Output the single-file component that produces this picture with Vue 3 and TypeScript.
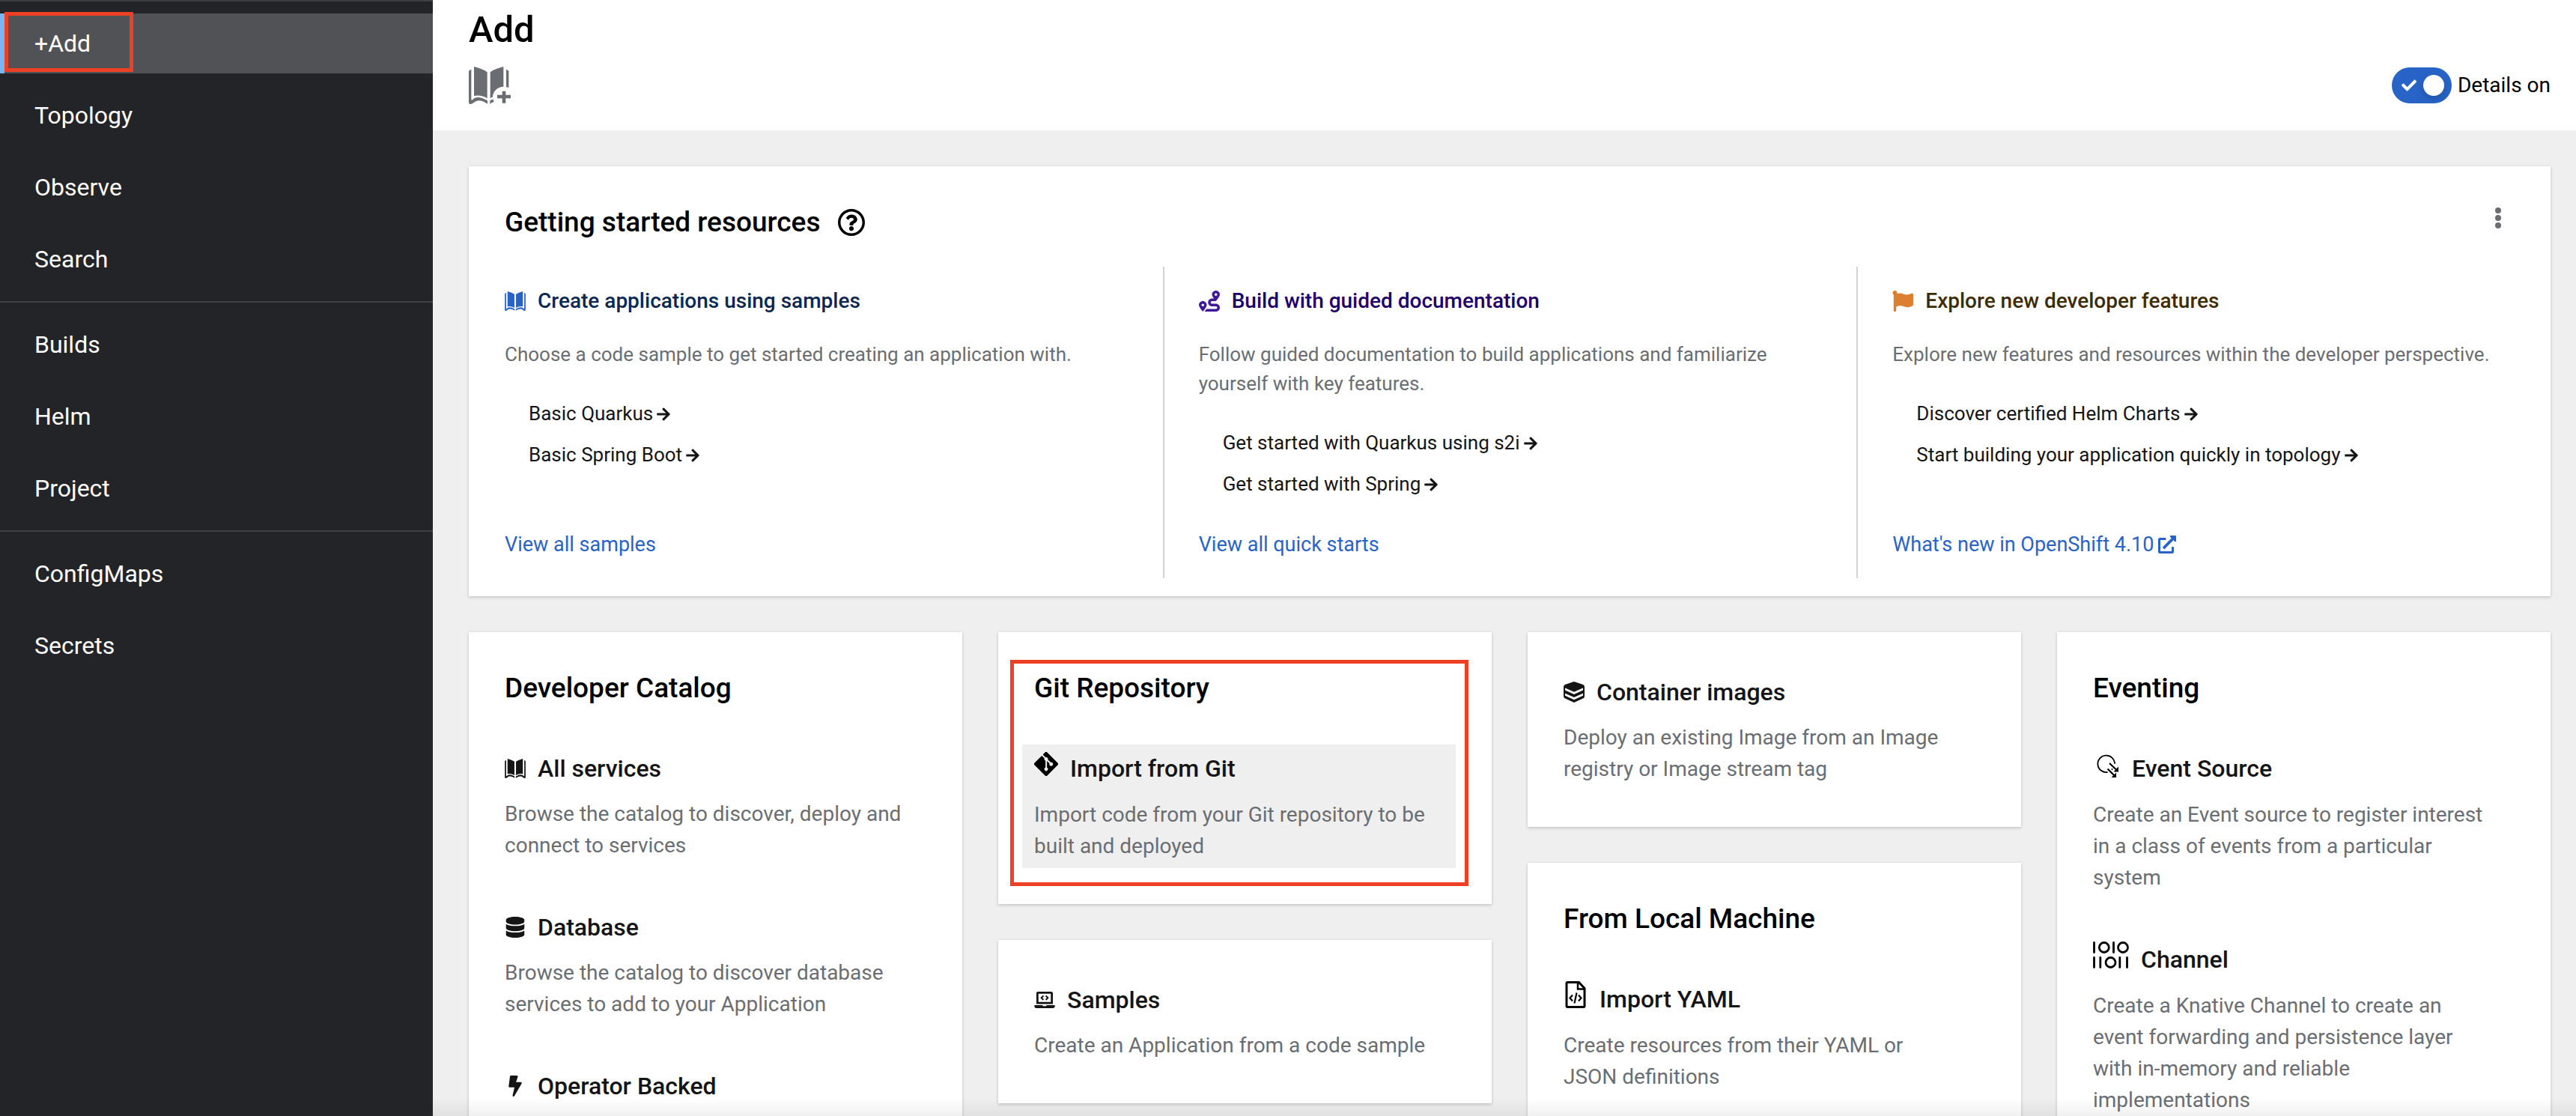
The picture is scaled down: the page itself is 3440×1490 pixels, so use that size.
<script setup lang="ts">
import { computed, h, ref } from 'vue'

interface IconDef {
  box: string
  width: number
  height: number
  path: string
}

const bookPath =
  'M0 18Q2 13 10 11V126Q10 140 15 133Q32 112 75 136V149Q40 126 20 144Q12 150 7 150Q0 150 0 143Z' +
  'M160 18Q158 13 150 11V126Q150 140 145 133Q128 112 85 136V149Q120 126 140 144Q148 150 153 150Q160 150 160 143Z' +
  'M21 0Q55 8 74 22V127Q50 112 21 117Z' +
  'M139 0Q105 8 86 22V127Q110 112 139 117Z'

const icons: Record<string, IconDef> = {
  catalog: { box: '0 0 160 150', width: 28, height: 26, path: bookPath },
  route: {
    box: '0 0 512 512', width: 28, height: 28,
    path: 'M416 320h-96c-17.6 0-32-14.4-32-32s14.4-32 32-32h96s96-107 96-160-43-96-96-96-96 43-96 96c0 25.5 22.2 63.4 45.3 96H320c-52.9 0-96 43.1-96 96s43.1 96 96 96h96c17.6 0 32 14.4 32 32s-14.4 32-32 32H185.5c-16 24.8-33.8 47.7-47.3 64H416c52.9 0 96-43.1 96-96s-43.1-96-96-96zm0-256c17.7 0 32 14.3 32 32s-14.3 32-32 32-32-14.3-32-32 14.3-32 32-32zM96 256c-53 0-96 43-96 96s96 160 96 160 96-107 96-160-43-96-96-96zm0 128c-17.7 0-32-14.3-32-32s14.3-32 32-32 32 14.3 32 32-14.3 32-32 32z',
  },
  flag: {
    box: '0 0 512 512', width: 28, height: 28,
    path: 'M349.565 98.783C295.978 98.783 251.721 64 184.348 64c-24.955 0-47.309 4.384-68.045 12.013a55.947 55.947 0 0 0 3.586-23.562C118.117 24.015 94.806 1.206 66.338.048 34.345-1.254 8 24.296 8 56c0 19.026 9.497 35.825 24 45.945V488c0 13.255 10.745 24 24 24h16c13.255 0 24-10.745 24-24v-94.4c28.311-12.064 63.582-22.122 114.435-22.122 53.588 0 97.844 34.783 165.217 34.783 48.169 0 86.667-16.294 122.505-40.858C506.84 359.452 512 349.571 512 339.045v-243.1c0-23.393-24.269-38.87-45.485-29.016-34.338 15.948-76.454 31.854-116.95 31.854z',
  },
  arrow: {
    box: '0 0 448 512', width: 18, height: 20,
    path: 'M190.5 66.9l22.2-22.2c9.4-9.4 24.6-9.4 33.9 0L441 239c9.4 9.4 9.4 24.6 0 33.9L246.6 467.3c-9.4 9.4-24.6 9.4-33.9 0l-22.2-22.2c-9.5-9.5-9.3-25 .4-34.3L311.4 296H24c-13.3 0-24-10.7-24-24v-32c0-13.3 10.7-24 24-24h287.4L190.9 101.2c-9.8-9.3-10-24.8-.4-34.3z',
  },
  external: {
    box: '0 0 512 512', width: 24, height: 24,
    path: 'M432,320H400a16,16,0,0,0-16,16V448H64V128H208a16,16,0,0,0,16-16V80a16,16,0,0,0-16-16H48A48,48,0,0,0,0,112V464a48,48,0,0,0,48,48H400a48,48,0,0,0,48-48V336A16,16,0,0,0,432,320ZM488,0h-128c-21.37,0-32.05,25.91-17,41l35.73,35.73L135,320.37a24,24,0,0,0,0,34L157.67,377a24,24,0,0,0,34,0L435.28,133.32,471,169c15,15,41,4.5,41-17V24A24,24,0,0,0,488,0Z',
  },
  help: {
    box: '8 8 496 496', width: 36, height: 36,
    path: 'M256 8C119.043 8 8 119.083 8 256c0 136.997 111.043 248 248 248s248-111.003 248-248C504 119.083 392.957 8 256 8zm0 448c-110.532 0-200-89.431-200-200 0-110.495 89.472-200 200-200 110.491 0 200 89.471 200 200 0 110.53-89.431 200-200 200zm107.244-255.2c0 67.052-72.421 68.084-72.421 92.863V300c0 6.627-5.373 12-12 12h-45.647c-6.627 0-12-5.373-12-12v-8.659c0-35.745 27.1-50.034 47.579-61.516 17.561-9.845 28.324-16.541 28.324-29.579 0-17.246-21.999-28.693-39.784-28.693-23.189 0-33.894 10.977-48.942 29.969-4.057 5.12-11.46 6.071-16.666 2.124l-27.824-21.098c-5.107-3.872-6.251-11.066-2.644-16.363C184.846 131.491 214.94 112 261.794 112c49.071 0 101.45 38.304 101.45 88.8zM298 368c0 23.159-18.841 42-42 42s-42-18.841-42-42 18.841-42 42-42 42 18.841 42 42z',
  },
  check: {
    box: '0 0 512 512', width: 20, height: 20,
    path: 'M173.898 439.404l-166.4-166.4c-9.997-9.997-9.997-26.206 0-36.204l36.203-36.204c9.997-9.998 26.207-9.998 36.204 0L192 312.69 432.095 72.596c9.997-9.997 26.207-9.997 36.204 0l36.203 36.204c9.997 9.997 9.997 26.206 0 36.204l-294.4 294.401c-9.998 9.997-26.207 9.997-36.204-.001z',
  },
  database: {
    box: '0 0 448 512', width: 28, height: 28,
    path: 'M448 73.143v45.714C448 159.143 347.667 192 224 192S0 159.143 0 118.857V73.143C0 32.857 100.333 0 224 0s224 32.857 224 73.143zM448 176v102.857C448 319.143 347.667 352 224 352S0 319.143 0 278.857V176c48.125 33.143 136.208 48.572 224 48.572S399.874 209.143 448 176zm0 160v102.857C448 479.143 347.667 512 224 512S0 479.143 0 438.857V336c48.125 33.143 136.208 48.572 224 48.572S399.874 369.143 448 336z',
  },
  bolt: {
    box: '0 0 320 512', width: 28, height: 28,
    path: 'M296 160H180.6l42.6-129.8C227.2 15 215.7 0 200 0H56C44 0 33.8 8.9 32.2 20.8l-32 240C-1.7 275.2 9.5 288 24 288h118.7L96.6 482.5c-3.6 15.2 8 29.5 23.3 29.5 8.4 0 16.4-4.4 20.8-12l176-304c9.3-15.9-2.2-36-20.7-36z',
  },
  laptop: {
    box: '0 0 640 512', width: 28, height: 22,
    path: 'M255.03 261.65c6.25 6.25 16.38 6.25 22.63 0l11.31-11.31c6.25-6.25 6.25-16.38 0-22.63L253.25 192l35.71-35.72c6.25-6.25 6.25-16.38 0-22.63l-11.31-11.31c-6.25-6.25-16.38-6.25-22.63 0l-58.34 58.34c-6.25 6.25-6.25 16.38 0 22.63l58.35 58.34zm96.01-11.3l11.31 11.31c6.25 6.25 16.38 6.25 22.63 0l58.34-58.34c6.25-6.25 6.25-16.38 0-22.63l-58.34-58.34c-6.25-6.25-16.38-6.25-22.63 0l-11.31 11.31c-6.25 6.25-6.25 16.38 0 22.63L386.75 192l-35.71 35.72c-6.25 6.25-6.25 16.38 0 22.63zM624 416H381.54c-.74 19.81-14.71 32-32.74 32H288c-18.69 0-33.02-17.47-32.77-32H16c-8.8 0-16 7.2-16 16v16c0 35.2 28.8 64 64 64h512c35.2 0 64-28.8 64-64v-16c0-8.8-7.2-16-16-16zM576 48c0-26.4-21.6-48-48-48H112C85.6 0 64 21.6 64 48v336h512V48zm-64 272H128V64h384v256z',
  },
  layers: {
    box: '0 0 28 28', width: 28, height: 28,
    path: 'M14 0L26 4Q28 5 28 7V19.500Q28 21.500 26.500 22.300L14 28L1.500 22.300Q0 21.500 0 19.500V7Q0 5 2 4ZM2 8.500V11.500L14 17L26 11.500V8.500L14 13.700ZM2 15.800V18.800L14 24.300L26 18.800V15.800L14 21Z',
  },
}

const Icon = (props: { name: string }) => {
  const d = icons[props.name]
  return h(
    'svg',
    { viewBox: d.box, width: d.width, height: d.height, fill: 'currentColor', 'aria-hidden': 'true' },
    [h('path', { d: d.path, 'fill-rule': 'evenodd' })],
  )
}
Icon.props = ['name']

const navSections = [
  ['+Add', 'Topology', 'Observe', 'Search'],
  ['Builds', 'Helm', 'Project'],
  ['ConfigMaps', 'Secrets'],
]
const active = ref('+Add')

const showDetails = ref(true)
const detailsLabel = computed(() => (showDetails.value ? 'Details on' : 'Details off'))

const resources = [
  {
    tone: 'blue', icon: 'catalog', title: 'Create applications using samples',
    text: 'Choose a code sample to get started creating an application with.',
    links: ['Basic Quarkus', 'Basic Spring Boot'],
    more: 'View all samples', external: false,
  },
  {
    tone: 'purple', icon: 'route', title: 'Build with guided documentation',
    text: 'Follow guided documentation to build applications and familiarize yourself with key features.',
    links: ['Get started with Quarkus using s2i', 'Get started with Spring'],
    more: 'View all quick starts', external: false,
  },
  {
    tone: 'orange', icon: 'flag', title: 'Explore new developer features',
    text: 'Explore new features and resources within the developer perspective.',
    links: ['Discover certified Helm Charts', 'Start building your application quickly in topology'],
    more: "What's new in OpenShift 4.10", external: true,
  },
]

interface Item {
  title: string
  icon?: string
  picture?: 'git' | 'yaml' | 'event' | 'channel'
  text?: string
  hovered?: boolean
}
interface Card {
  title?: string
  marked?: boolean
  items: Item[]
}

const columns: Card[][] = [
  [
    {
      title: 'Developer Catalog',
      items: [
        { icon: 'catalog', title: 'All services', text: 'Browse the catalog to discover, deploy and connect to services' },
        { icon: 'database', title: 'Database', text: 'Browse the catalog to discover database services to add to your Application' },
        { icon: 'bolt', title: 'Operator Backed' },
      ],
    },
  ],
  [
    {
      title: 'Git Repository',
      marked: true,
      items: [
        { picture: 'git', title: 'Import from Git', text: 'Import code from your Git repository to be built and deployed', hovered: true },
      ],
    },
    { items: [{ icon: 'laptop', title: 'Samples', text: 'Create an Application from a code sample' }] },
  ],
  [
    { items: [{ icon: 'layers', title: 'Container images', text: 'Deploy an existing Image from an Image registry or Image stream tag' }] },
    {
      title: 'From Local Machine',
      items: [{ picture: 'yaml', title: 'Import YAML', text: 'Create resources from their YAML or JSON definitions' }],
    },
  ],
  [
    {
      title: 'Eventing',
      items: [
        { picture: 'event', title: 'Event Source', text: 'Create an Event source to register interest in a class of events from a particular system' },
        { picture: 'channel', title: 'Channel', text: 'Create a Knative Channel to create an event forwarding and persistence layer with in-memory and reliable implementations' },
      ],
    },
  ],
]
</script>

<template>
  <div class="app">
    <nav class="sidebar" aria-label="Main">
      <ul v-for="(section, i) in navSections" :key="i" class="nav-section">
        <li v-for="name in section" :key="name" class="nav-item">
          <a href="#" class="nav-link" :class="{ active: name === active }" @click.prevent="active = name">{{ name }}</a>
          <span v-if="name === '+Add'" class="marker marker-nav"></span>
        </li>
      </ul>
    </nav>

    <main class="main">
      <header class="page-header">
        <h1>Add</h1>
        <div class="toolbar">
          <button type="button" class="plain" aria-label="Add to catalog">
            <svg class="book" viewBox="0 0 168 150" width="56" height="50" aria-hidden="true">
              <mask id="book-cut">
                <rect width="168" height="150" fill="#fff" />
                <ellipse cx="141" cy="121" rx="45" ry="41" fill="#000" />
              </mask>
              <path :d="bookPath" mask="url(#book-cut)" />
              <path d="M134 98h14v15h20v14h-20v19h-14v-19h-20v-14h20z" />
            </svg>
          </button>
          <label class="switch">
            <span class="switch-control">
              <input v-model="showDetails" type="checkbox" role="switch" />
              <Icon v-if="showDetails" name="check" class="switch-check" />
            </span>
            <span>{{ detailsLabel }}</span>
          </label>
        </div>
      </header>

      <div class="content">
        <section class="card resources">
          <div class="resources-head">
            <h2>Getting started resources</h2>
            <button type="button" class="plain help" aria-label="Help"><Icon name="help" /></button>
            <button type="button" class="plain kebab" aria-label="Actions">
              <svg viewBox="0 0 32 42" width="32" height="42" fill="currentColor" aria-hidden="true">
                <circle cx="16" cy="11" r="4" />
                <circle cx="16" cy="21" r="4" />
                <circle cx="16" cy="31" r="4" />
              </svg>
            </button>
          </div>
          <div class="resource-columns">
            <article v-for="r in resources" :key="r.title" class="resource" :class="r.tone">
              <h3><Icon :name="r.icon" class="tone-icon" />{{ r.title }}</h3>
              <p>{{ r.text }}</p>
              <ul>
                <li v-for="link in r.links" :key="link">
                  <a href="#">{{ link }}<Icon name="arrow" /></a>
                </li>
              </ul>
              <a href="#" class="more">{{ r.more }}<Icon v-if="r.external" name="external" /></a>
            </article>
          </div>
        </section>

        <div class="card-grid">
          <div v-for="(column, c) in columns" :key="c" class="column">
            <section v-for="(card, k) in column" :key="k" class="card group">
              <h2 v-if="card.title">{{ card.title }}</h2>
              <div v-for="item in card.items" :key="item.title" class="item" :class="{ hovered: item.hovered }">
                <a href="#" class="item-title" :class="{ tall: item.picture }">
                  <Icon v-if="item.icon" :name="item.icon" />
                  <span v-else class="picture">
                    <svg v-if="item.picture === 'git'" viewBox="0 32 448 448" width="32" height="32" aria-hidden="true">
                      <path d="M439.55 236.05L244 40.45a28.87 28.87 0 0 0-40.81 0l-40.66 40.63 51.52 51.52c27.06-9.14 52.68 16.77 43.39 43.68l49.66 49.66c34.23-11.8 61.18 31 35.47 56.69-26.49 26.49-70.21-2.87-56-37.34L240.22 199v121.85c25.3 12.54 22.26 41.85 9.08 55a34.34 34.34 0 0 1-48.55 0c-17.57-17.6-11.07-46.91 11.25-56v-123c-20.8-8.51-24.6-30.74-18.64-45L142.57 101 8.45 235.14a28.86 28.86 0 0 0 0 40.81l195.61 195.6a28.86 28.86 0 0 0 40.8 0l194.69-194.69a28.86 28.86 0 0 0 0-40.81z" />
                    </svg>
                    <svg v-else-if="item.picture === 'yaml'" viewBox="0 0 32 36" width="32" height="36" fill="none" stroke="#000" aria-hidden="true">
                      <path d="M5.500 1.500H20.500L28 9.500V33Q28 34.500 26.500 34.500H5.500Q4 34.500 4 33V3Q4 1.500 5.500 1.500Z" stroke-width="3" />
                      <path d="M19 1.500V10.500H28" stroke-width="2.500" />
                      <path d="M12 18.500L8.500 22.500L12 26.500M20 18.500L23.500 22.500L20 26.500M17.500 15.500L14.500 29.500" stroke-width="2.200" />
                    </svg>
                    <svg v-else-if="item.picture === 'event'" viewBox="0 0 36 36" width="36" height="36" aria-hidden="true">
                      <path d="M29 17.700A11.300 11.300 0 1 0 19.500 29" fill="none" stroke="#000" stroke-width="1.800" />
                      <path d="M22 17L31.500 26M19.500 24.500L28.500 33.500" fill="none" stroke="#000" stroke-width="2.200" />
                      <path d="M34 21.500V28.500H27.500ZM31 29.500V36H24.500Z" />
                      <circle cx="25.500" cy="25" r="1" />
                    </svg>
                    <svg v-else viewBox="0 0 48 36" width="48" height="36" fill="none" stroke="#000" stroke-width="2.800" stroke-linecap="round" aria-hidden="true">
                      <path d="M1.500 1.500V14.500M27.500 1.500V14.500M1.500 21.500V34.500M9.800 21.500V34.500M35.800 21.500V34.500M45.500 21.500V34.500" />
                      <circle cx="14.800" cy="8" r="6.500" />
                      <circle cx="40" cy="8" r="6.500" />
                      <circle cx="23.500" cy="28" r="6.500" />
                    </svg>
                  </span>
                  {{ item.title }}
                </a>
                <p v-if="item.text && showDetails">{{ item.text }}</p>
              </div>
              <span v-if="card.marked" class="marker marker-card"></span>
            </section>
          </div>
        </div>
      </div>
      <div class="fade"></div>
    </main>
  </div>
</template>

<style>
body {
  margin: 0;
  overflow: hidden;
}
</style>

<style scoped>
.app {
  display: flex;
  height: 100vh;
  overflow: hidden;
  font-family: Roboto, 'Liberation Sans', sans-serif;
  font-size: 28px;
  line-height: 42px;
  color: #151515;
  background: #efefef;
}
h1, h2, h3, p, ul {
  margin: 0;
  padding: 0;
}
h1, h2, h3 {
  font-weight: 500;
}
ul {
  list-style: none;
}
a {
  color: inherit;
  text-decoration: none;
}
svg {
  display: block;
  flex: none;
}
.plain {
  padding: 0;
  border: 0;
  background: none;
  color: inherit;
  cursor: pointer;
}

.sidebar {
  flex: 0 0 578px;
  background: #232428;
  color: #fff;
  font-size: 32px;
}
.nav-section {
  display: flex;
  flex-direction: column;
  gap: 16px;
  padding: 16px 0;
  border-top: 2px solid #3e3f43;
}
.nav-item {
  position: relative;
}
.nav-link {
  display: block;
  padding-left: 40px;
  border-left: 6px solid transparent;
  line-height: 80px;
}
.nav-link.active {
  background: #515256;
  border-left-color: #7ab5f0;
}
.marker {
  position: absolute;
  border: 5px solid #ee4024;
  pointer-events: none;
}
.marker-nav {
  top: -2px;
  bottom: 2px;
  left: 6px;
  width: 162px;
}
.marker-card {
  top: 37px;
  right: 31px;
  bottom: 24px;
  left: 16px;
}

.main {
  flex: 1;
  min-width: 0;
  position: relative;
  overflow: hidden;
}
.page-header {
  padding: 9px 34px 36px 48px;
  background: #fff;
  color: #000;
}
h1 {
  font-size: 49px;
  line-height: 62px;
}
.toolbar {
  display: flex;
  align-items: center;
  justify-content: space-between;
  height: 48px;
  margin-top: 19px;
}
.book {
  fill: #6a6e73;
}
.switch {
  display: flex;
  align-items: center;
  gap: 8px;
  cursor: pointer;
}
.switch-control {
  position: relative;
  display: flex;
}
.switch input {
  appearance: none;
  display: flex;
  align-items: center;
  width: 80px;
  height: 48px;
  margin: 0;
  padding: 0 10px;
  border-radius: 24px;
  background: #8a8d90;
}
.switch input::before {
  content: '';
  width: 28px;
  height: 28px;
  border-radius: 50%;
  background: #fff;
  box-shadow: 0 4px 12px rgba(3, 3, 3, 0.2);
}
.switch input:checked {
  justify-content: flex-end;
  background: #2864c8;
}
.switch-check {
  position: absolute;
  top: 14px;
  left: 13px;
  color: #fff;
}

.content {
  display: flex;
  flex-direction: column;
  gap: 48px;
  padding: 48px 34px 48px 48px;
}
.card {
  background: #fff;
  box-shadow: 0 2px 4px rgba(3, 3, 3, 0.14), 0 0 4px rgba(3, 3, 3, 0.08);
}
h2 {
  font-size: 37px;
  line-height: 54px;
  color: #000;
}
.resources {
  padding: 48px 0 24px;
}
.resources-head {
  display: flex;
  align-items: center;
  padding: 0 54px 0 48px;
}
.help {
  margin-left: 24px;
  color: #000;
}
.kebab {
  align-self: flex-start;
  margin-left: auto;
  color: #6a6e73;
}
.resource-columns {
  display: grid;
  grid-template-columns: repeat(3, 1fr);
  margin-top: 32px;
}
.resource {
  display: flex;
  flex-direction: column;
  padding: 25px 48px 24px 46px;
  border-left: 2px solid #d2d2d2;
}
.resource:first-child {
  border-left-color: transparent;
}
.resource h3 {
  display: flex;
  align-items: center;
  gap: 16px;
  font-size: 28px;
  line-height: 42px;
}
.blue h3 {
  color: #0b2850;
}
.blue .tone-icon {
  color: #2864c8;
}
.purple h3 {
  color: #1f0066;
}
.purple .tone-icon {
  color: #40199a;
}
.orange h3 {
  color: #3d2c00;
}
.orange .tone-icon {
  color: #dc7f30;
}
.resource p {
  margin-top: 31px;
  font-size: 26px;
  line-height: 39px;
  color: #6a6e73;
}
.resource ul {
  display: flex;
  flex-direction: column;
  gap: 16px;
  margin: 40px 0;
  padding-left: 32px;
  font-size: 26px;
  line-height: 39px;
}
.resource li a {
  display: flex;
  align-items: center;
  gap: 5px;
}
.more {
  display: flex;
  align-items: center;
  gap: 6px;
  margin-top: auto;
  font-size: 27px;
  color: #2864c8;
}

.card-grid {
  display: grid;
  grid-template-columns: repeat(4, 1fr);
  align-items: start;
  gap: 48px;
}
.column {
  display: flex;
  flex-direction: column;
  gap: 48px;
}
.group {
  position: relative;
  display: flex;
  flex-direction: column;
  gap: 48px;
  padding: 48px;
}
.item {
  margin-left: -16px;
  padding: 8px 32px 8px 16px;
}
.item.hovered {
  background: #efefef;
}
.item-title {
  display: flex;
  align-items: center;
  gap: 16px;
  font-size: 32px;
  font-weight: 500;
  line-height: 48px;
}
.item-title.tall {
  line-height: 49px;
}
.picture {
  display: flex;
  align-items: center;
  align-self: flex-start;
  height: 36px;
}
.item p {
  margin-top: 16px;
  color: #6a6e73;
}

.fade {
  position: absolute;
  right: 0;
  bottom: 0;
  left: 0;
  height: 24px;
  background: linear-gradient(rgba(0, 0, 0, 0), rgba(0, 0, 0, 0.06));
  pointer-events: none;
}
</style>
